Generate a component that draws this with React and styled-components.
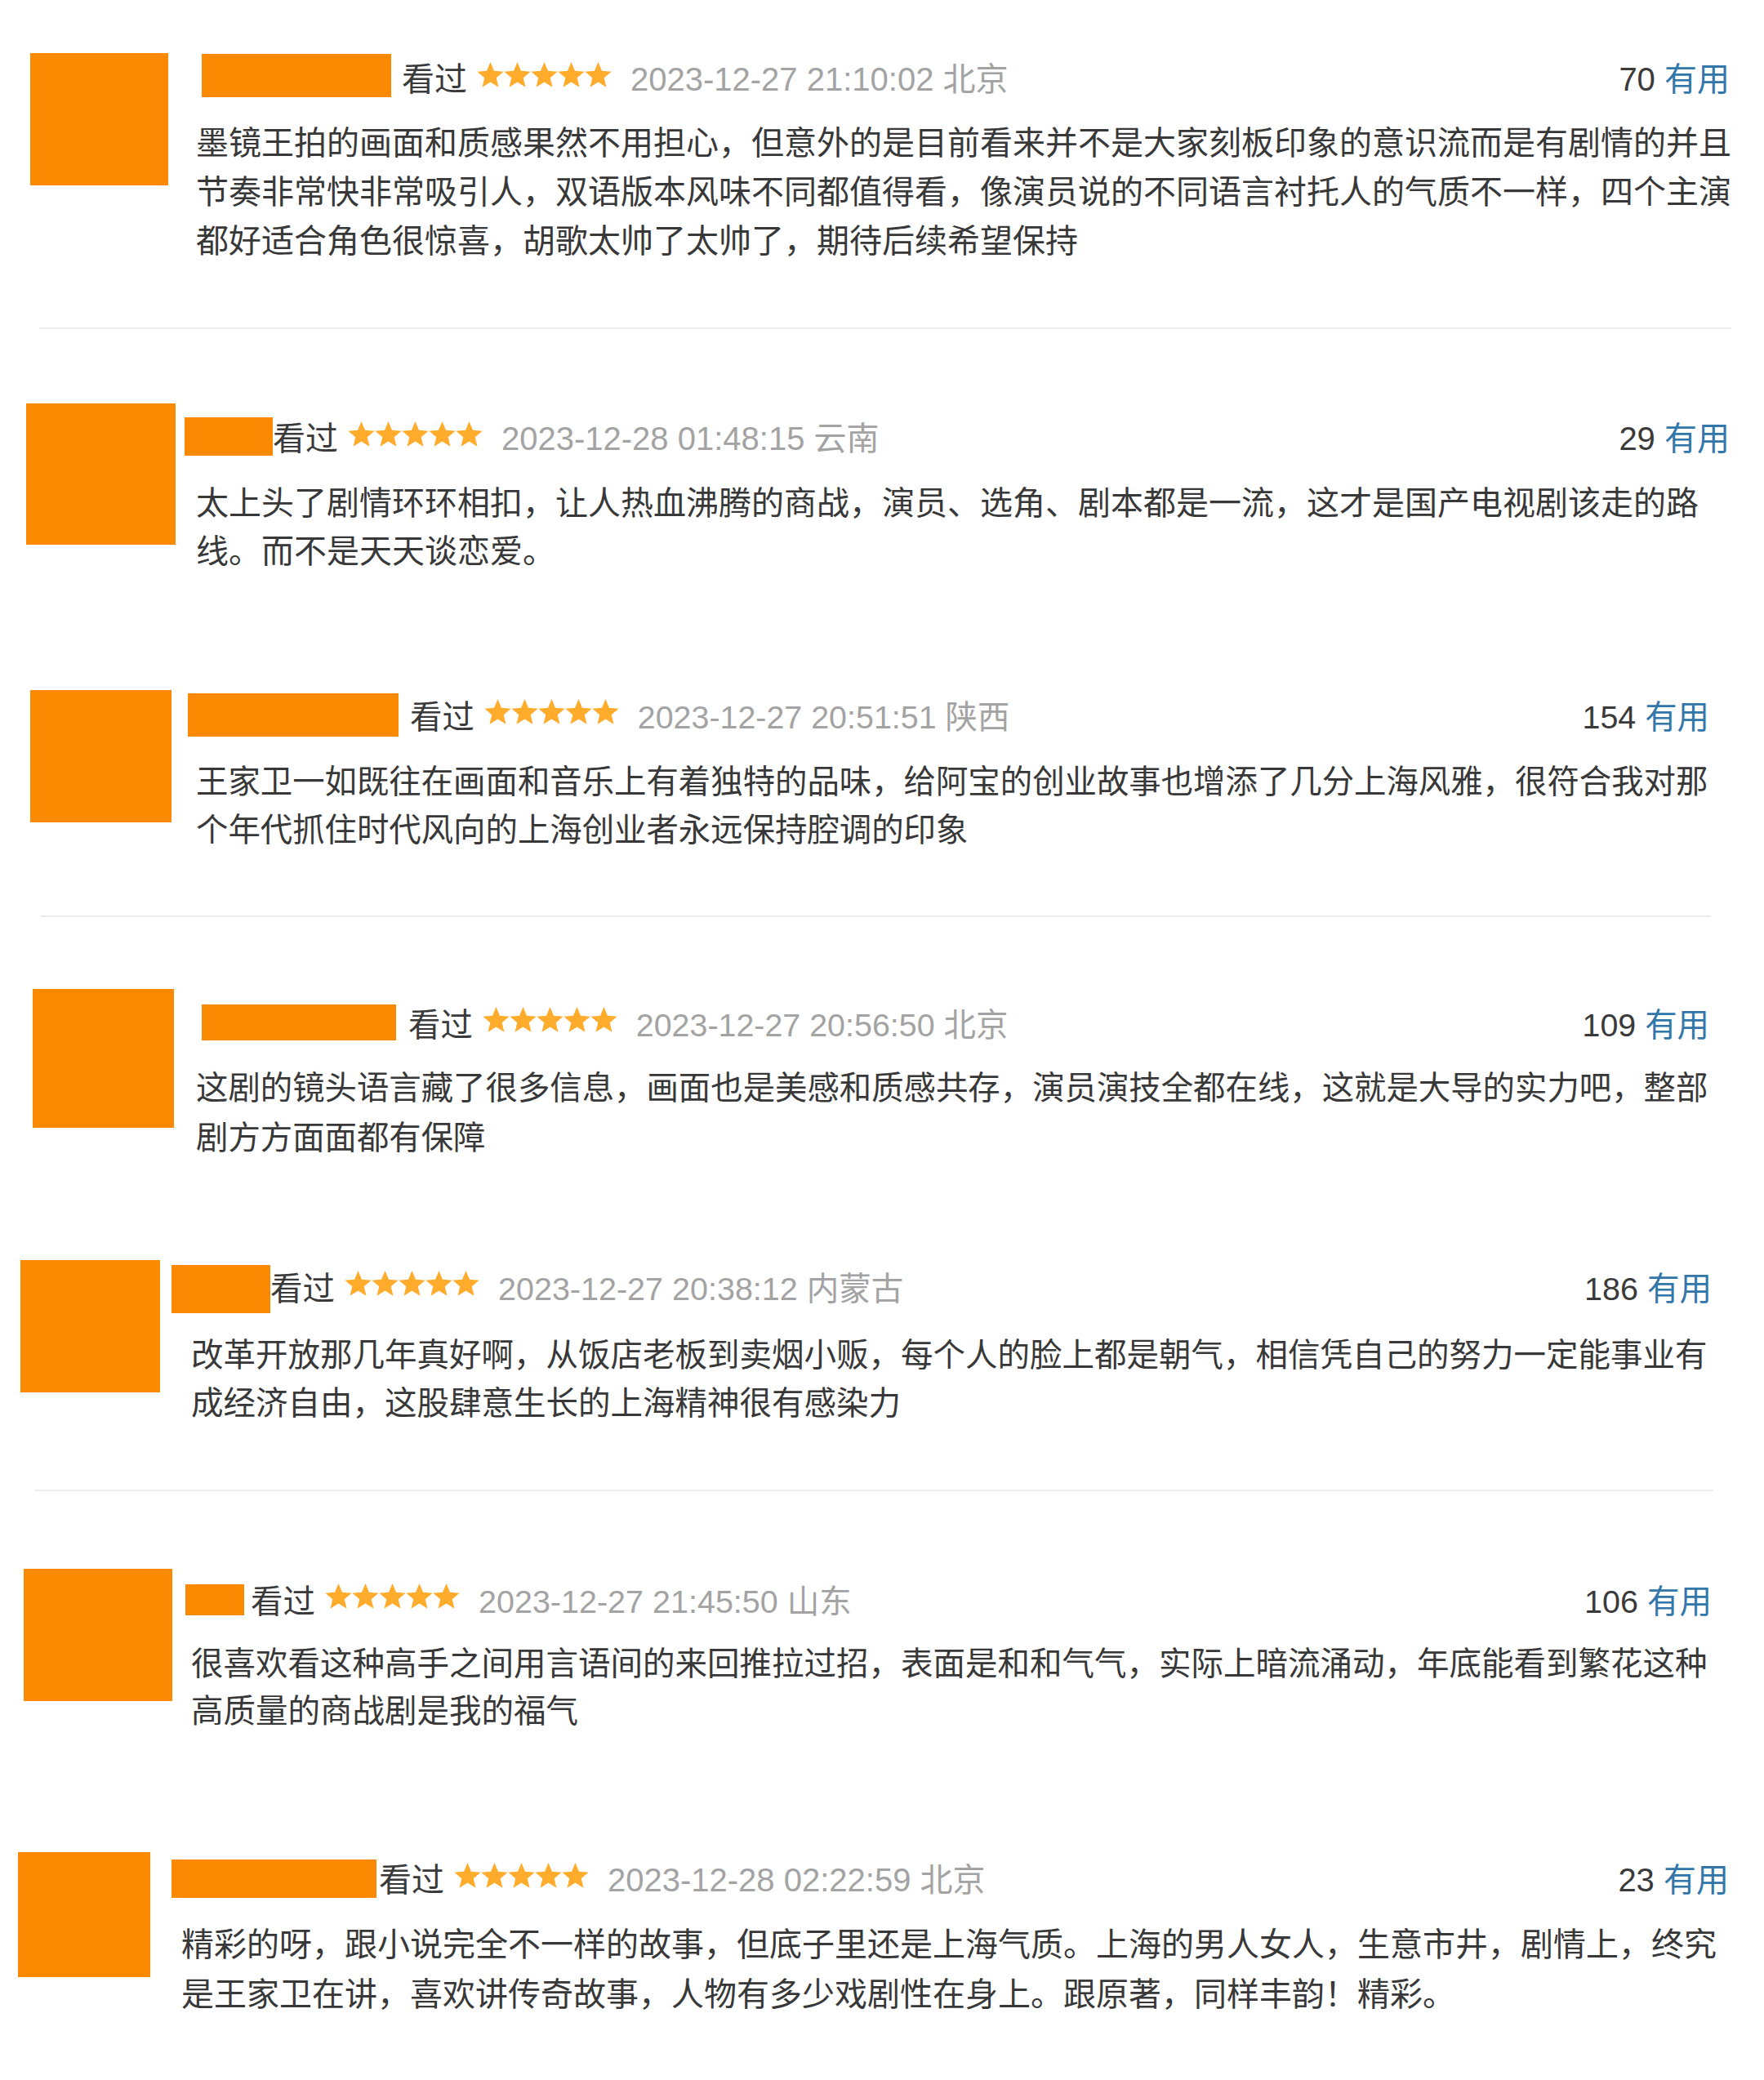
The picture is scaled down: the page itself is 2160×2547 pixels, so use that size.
import React from 'react'
import styled, { createGlobalStyle } from 'styled-components'

const GlobalStyle = createGlobalStyle`
  html, body {
    margin: 0;
    padding: 0;
    background: #fff;
  }
  body {
    font-family: "Liberation Sans", "Noto Sans CJK SC", sans-serif;
  }
`

const ORANGE = '#fb8a02'

const entries = [
  {
    h: 401, av: { x: 37, y: 65, w: 169, h: 162 }, bodyX: 240, right: 2118, padTop: 67,
    mask: { dx: 7, dy: -1, w: 232, h: 53, gap: 13 }, fs: 40, lh: 60, cmtTop: 18,
    time: '2023-12-27 21:10:02', place: '北京', votes: 70,
    lines: [
      '墨镜王拍的画面和质感果然不用担心，但意外的是目前看来并不是大家刻板印象的意识流而是有剧情的并且',
      '节奏非常快非常吸引人，双语版本风味不同都值得看，像演员说的不同语言衬托人的气质不一样，四个主演',
      '都好适合角色很惊喜，胡歌太帅了太帅了，期待后续希望保持',
    ],
    divider: { x: 48, w: 2072 },
  },
  {
    h: 357, av: { x: 32, y: 91, w: 183, h: 173 }, bodyX: 240, right: 2118, padTop: 104,
    mask: { dx: -14, dy: 4, w: 108, h: 47, gap: 0 }, fs: 40, lh: 59, cmtTop: 20,
    time: '2023-12-28 01:48:15', place: '云南', votes: 29,
    lines: [
      '太上头了剧情环环相扣，让人热血沸腾的商战，演员、选角、剧本都是一流，这才是国产电视剧该走的路',
      '线。而不是天天谈恋爱。',
    ],
  },
  {
    h: 361, av: { x: 37, y: 85, w: 173, h: 162 }, bodyX: 240, right: 2093, padTop: 87,
    mask: { dx: -10, dy: 2, w: 258, h: 53, gap: 14 }, fs: 39.4, lh: 59, cmtTop: 21,
    time: '2023-12-27 20:51:51', place: '陕西', votes: 154,
    lines: [
      '王家卫一如既往在画面和音乐上有着独特的品味，给阿宝的创业故事也增添了几分上海风雅，很符合我对那',
      '个年代抓住时代风向的上海创业者永远保持腔调的印象',
    ],
    divider: { x: 50, w: 2045 },
  },
  {
    h: 357, av: { x: 40, y: 88, w: 173, h: 170 }, bodyX: 240, right: 2093, padTop: 101,
    mask: { dx: 7, dy: 6, w: 238, h: 44, gap: 15 }, fs: 39.4, lh: 61, cmtTop: 18,
    time: '2023-12-27 20:56:50', place: '北京', votes: 109,
    lines: [
      '这剧的镜头语言藏了很多信息，画面也是美感和质感共存，演员演技全都在线，这就是大导的实力吧，整部',
      '剧方方面面都有保障',
    ],
  },
  {
    h: 344, av: { x: 25, y: 63, w: 171, h: 162 }, bodyX: 234, right: 2096, padTop: 67,
    mask: { dx: -24, dy: 2, w: 121, h: 59, gap: 0 }, fs: 39.5, lh: 59, cmtTop: 23,
    time: '2023-12-27 20:38:12', place: '内蒙古', votes: 186,
    lines: [
      '改革开放那几年真好啊，从饭店老板到卖烟小贩，每个人的脸上都是朝气，相信凭自己的努力一定能事业有',
      '成经济自由，这股肆意生长的上海精神很有感染力',
    ],
    divider: { x: 43, w: 2055 },
  },
  {
    h: 364, av: { x: 29, y: 95, w: 182, h: 162 }, bodyX: 234, right: 2096, padTop: 104,
    mask: { dx: -7, dy: 10, w: 72, h: 38, gap: 8 }, fs: 39.5, lh: 58, cmtTop: 18,
    time: '2023-12-27 21:45:50', place: '山东', votes: 106,
    lines: [
      '很喜欢看这种高手之间用言语间的来回推拉过招，表面是和和气气，实际上暗流涌动，年底能看到繁花这种',
      '高质量的商战剧是我的福气',
    ],
  },
  {
    h: 357, av: { x: 22, y: 78, w: 162, h: 153 }, bodyX: 222, right: 2117, padTop: 82,
    mask: { dx: -12, dy: 5, w: 251, h: 47, gap: 3 }, fs: 40, lh: 61, cmtTop: 19,
    time: '2023-12-28 02:22:59', place: '北京', votes: 23,
    lines: [
      '精彩的呀，跟小说完全不一样的故事，但底子里还是上海气质。上海的男人女人，生意市井，剧情上，终究',
      '是王家卫在讲，喜欢讲传奇故事，人物有多少戏剧性在身上。跟原著，同样丰韵！精彩。',
    ],
  },
]

// five-point star, outer radius 17, inner 7.6
function starPoints(cx, cy) {
  const pts = []
  for (let k = 0; k < 10; k++) {
    const r = k % 2 === 0 ? 17 : 7.6
    const a = -Math.PI / 2 + (k * Math.PI) / 5
    pts.push(`${(cx + r * Math.cos(a)).toFixed(2)},${(cy + r * Math.sin(a)).toFixed(2)}`)
  }
  return pts.join(' ')
}

function Stars() {
  return (
    <StarSvg viewBox="0 0 166 36" width="166" height="36">
      {[0, 1, 2, 3, 4].map(i => (
        <polygon key={i} points={starPoints(16.5 + i * 33, 19)} fill="#ffac2d" />
      ))}
    </StarSvg>
  )
}

function Review({ e }) {
  return (
    <>
      <Section $h={e.h}>
        <Avatar $x={e.av.x} $y={e.av.y} $w={e.av.w} $h={e.av.h} />
        <Body
          $ml={e.bodyX - e.av.x - e.av.w}
          $mr={2160 - e.right}
          $pt={e.padTop}
          $fs={e.fs}
        >
          <Header>
            <NameMask $dx={e.mask.dx} $dy={e.mask.dy} $w={e.mask.w} $h={e.mask.h} $gap={e.mask.gap} />
            <Watched>看过</Watched>
            <Stars />
            <Time>{e.time} {e.place}</Time>
            <Votes>
              {e.votes} <Useful>有用</Useful>
            </Votes>
          </Header>
          <Comment $lh={e.lh} $mt={e.cmtTop + 6}>{e.lines.join('\n')}</Comment>
        </Body>
      </Section>
      {e.divider && <Divider $x={e.divider.x} $w={e.divider.w} />}
    </>
  )
}

export default function App() {
  return (
    <Page>
      <GlobalStyle />
      {entries.map((e, i) => <Review key={i} e={e} />)}
    </Page>
  )
}

const Page = styled.div`
  width: 2160px;
  height: 2547px;
  overflow: hidden;
  background: #fff;
`

const Section = styled.div`
  display: flex;
  align-items: flex-start;
  height: ${p => p.$h}px;
  box-sizing: border-box;
`

const Avatar = styled.div`
  flex-shrink: 0;
  width: ${p => p.$w}px;
  height: ${p => p.$h}px;
  margin-left: ${p => p.$x}px;
  margin-top: ${p => p.$y}px;
  background: ${ORANGE};
`

const Body = styled.div`
  flex: 1;
  min-width: 0;
  margin-left: ${p => p.$ml}px;
  margin-right: ${p => p.$mr}px;
  padding-top: ${p => p.$pt}px;
  font-size: ${p => p.$fs}px;
`

const Header = styled.div`
  display: flex;
  align-items: center;
  height: 54px;
  white-space: nowrap;
`

const NameMask = styled.div`
  flex-shrink: 0;
  align-self: flex-start;
  width: ${p => p.$w}px;
  height: ${p => p.$h}px;
  margin-left: ${p => p.$dx}px;
  margin-top: ${p => p.$dy}px;
  margin-right: ${p => p.$gap}px;
  background: ${ORANGE};
`

const Watched = styled.span`
  color: #3a3a3a;
`

const StarSvg = styled.svg`
  flex-shrink: 0;
  margin-left: 12px;
  margin-top: -5px;
`

const Time = styled.span`
  margin-left: 22px;
  color: #a3a3a3;
`

const Votes = styled.span`
  margin-left: auto;
  color: #3a3a3a;
`

const Useful = styled.span`
  color: #3377aa;
`

const Comment = styled.div`
  margin-top: ${p => p.$mt}px;
  line-height: ${p => p.$lh}px;
  white-space: pre;
  color: #383838;
`

const Divider = styled.div`
  height: 2px;
  width: ${p => p.$w}px;
  margin-left: ${p => p.$x}px;
  background: #ececec;
`
